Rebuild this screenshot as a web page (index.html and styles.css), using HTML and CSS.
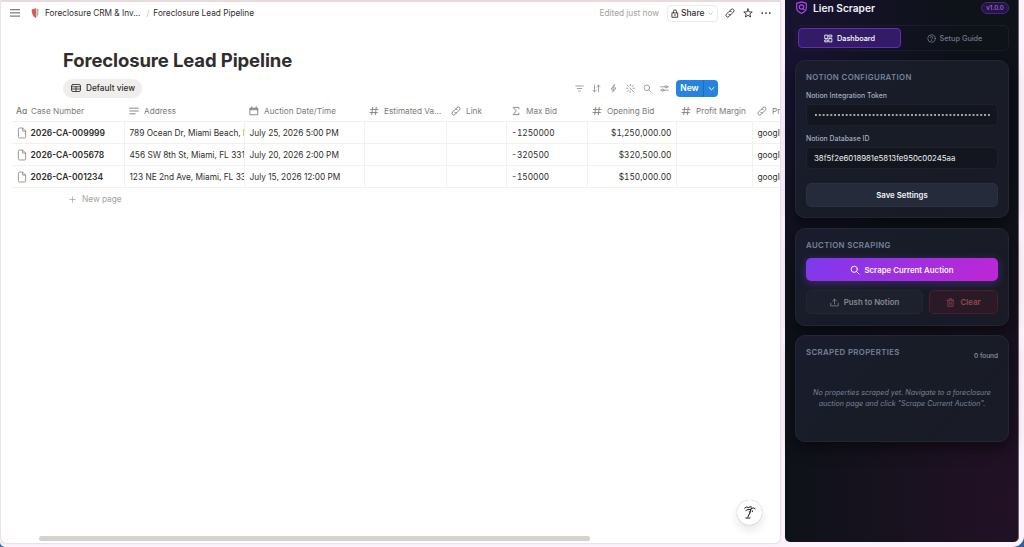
FILE: index.html
```html
<!DOCTYPE html>
<html lang="en">
<head>
  <meta charset="UTF-8">
  <meta name="viewport" content="width=device-width, initial-scale=1.0">
  <title>Foreclosure Lead Pipeline</title>
  <link rel="stylesheet" href="styles.css">
</head>
<body>

  <!-- Shared icons -->
  <svg class="sprite">
    <symbol id="i-hash" viewBox="0 0 16 16"><path d="M6 2 4.400 14M11.600 2 10 14M2.400 5.500h12M1.600 10.500h12"/></symbol>
    <symbol id="i-link" viewBox="0 0 16 16"><path d="M6 10.500a2.800 2.800 0 0 0 3.900-.4l3.700-3.800a2.700 2.700 0 0 0-3.900-3.900L7.500 4.600M10 5.500a2.800 2.800 0 0 0-3.900.4L2.400 9.700a2.700 2.700 0 0 0 3.900 3.900l2.200-2.200"/></symbol>
    <symbol id="i-page" viewBox="0 0 16 20"><path d="M2 3.500A1.800 1.800 0 0 1 3.800 1.700H9l5 5V16.500a1.800 1.800 0 0 1-1.800 1.800H3.800A1.800 1.800 0 0 1 2 16.500zM9 2v4.800h5"/></symbol>
    <symbol id="i-search" viewBox="0 0 16 16"><circle cx="6.800" cy="6.800" r="5"/><path d="m10.500 10.500 4 4"/></symbol>
    <symbol id="i-down" viewBox="0 0 10 10"><path d="m1.500 3.500 3.500 3.300 3.500-3.300"/></symbol>
  </svg>

  <div class="browser">
    <main class="page">
      <header class="topbar">
        <svg class="menu" viewBox="0 0 10 8"><path d="M0 .7h10M0 3.900h10M0 7.100h10"/></svg>
        <svg class="shield" viewBox="0 0 10 12">
          <path d="M5 .8Q7 2 9.200 1.800 9.700 8.500 5 11.500z" fill="#d9dcde"/>
          <path d="M5 .8Q3 2 .8 1.800.3 8.500 5 11.500z" fill="#e0564a"/>
          <path d="M5 1v10" stroke="#7d4b47" stroke-width=".6"/>
          <path d="M7 2v7.500" stroke="#8b8f92" stroke-width=".8"/>
        </svg>
        <span class="crumb">Foreclosure CRM &amp; Inv...</span>
        <span class="slash">/</span>
        <span class="crumb">Foreclosure Lead Pipeline</span>
        <div class="top-actions">
          <span class="edited">Edited just now</span>
          <button class="share">
            <svg class="lock" viewBox="0 0 8 10"><path d="M1 4.300h6v4.900H1zM2.300 4.200V2.700a1.700 1.700 0 0 1 3.400 0v1.500M4 6v1.500"/></svg>
            Share
            <svg class="chev"><use href="#i-down"/></svg>
          </button>
          <svg class="act"><use href="#i-link"/></svg>
          <svg class="act" viewBox="0 0 16 16"><path d="m8 1.500 1.800 4.700 5 .2-3.900 3.100 1.300 4.900L8 11.700l-4.200 2.700 1.300-4.900L1.200 6.400l5-.2z"/></svg>
          <svg class="act dots" viewBox="0 0 16 16"><circle cx="2" cy="8" r="1.400"/><circle cx="8" cy="8" r="1.400"/><circle cx="14" cy="8" r="1.400"/></svg>
        </div>
      </header>

      <h1>Foreclosure Lead Pipeline</h1>

      <div class="viewbar">
        <button class="view">
          <svg viewBox="0 0 20 16"><rect x="1" y="1" width="18" height="14" rx="3"/><path d="M1 5.500h18M1 10h18M10 5.500V15"/></svg>
          Default view
        </button>
        <div class="tools">
          <svg viewBox="0 0 16 16"><path d="M1.500 3.500h13M4 8h8M6.300 12.500h3.400"/></svg>
          <svg viewBox="0 0 16 16"><path d="M4.500 2v12M1.500 11l3 3 3-3M11.500 14V2M8.500 5l3-3 3 3"/></svg>
          <svg viewBox="0 0 16 16"><path d="M9.500 1.500 3.500 9H8l-1.500 5.500L12.500 7H8z"/></svg>
          <svg viewBox="0 0 16 16"><path d="m7 7 7.500 7.500M7.500 1v2.500M1 7.500h2.500M13.500 2l-2.700 2.700M2 13.500l2.700-2.700M12.500 7.500H15M7.500 12.500V15M2 2l2 2"/></svg>
          <svg><use href="#i-search"/></svg>
          <svg viewBox="0 0 16 16"><path d="M1 5h8M13 5h2M1 11h2M7 11h8"/><circle cx="11" cy="5" r="2"/><circle cx="5" cy="11" r="2"/></svg>
        </div>
        <button class="new"><span>New</span><i><svg><use href="#i-down"/></svg></i></button>
      </div>

      <div class="table">
        <div class="row head">
          <div><b class="aa">Aɑ</b>Case Number</div>
          <div><svg viewBox="0 0 16 16"><path d="M1 3.500h14M1 8h14M1 12.500h9"/></svg>Address</div>
          <div><svg viewBox="0 0 16 16"><path d="M2 3.500h12v10.500H2zM2 4.500h12M2 6h12M4.500 1v2M11.500 1v2"/></svg>Auction Date/Time</div>
          <div><svg><use href="#i-hash"/></svg>Estimated Va...</div>
          <div><svg><use href="#i-link"/></svg>Link</div>
          <div><svg viewBox="0 0 16 16"><path d="M12.500 4.500V2.200H3.300L8.500 8l-5.200 5.800h9.200v-2.300"/></svg>Max Bid</div>
          <div><svg><use href="#i-hash"/></svg>Opening Bid</div>
          <div><svg><use href="#i-hash"/></svg>Profit Margin</div>
          <div><svg><use href="#i-link"/></svg>Property</div>
        </div>
        <div class="row">
          <div class="name"><svg><use href="#i-page"/></svg>2026-CA-009999</div>
          <div>789 Ocean Dr, Miami Beach, FL</div>
          <div>July 25, 2026 5:00 PM</div>
          <div></div><div></div>
          <div class="calc">-1250000</div>
          <div class="calc num">$1,250,000.00</div>
          <div></div>
          <div>google.com</div>
        </div>
        <div class="row">
          <div class="name"><svg><use href="#i-page"/></svg>2026-CA-005678</div>
          <div>456 SW 8th St, Miami, FL 33130</div>
          <div>July 20, 2026 2:00 PM</div>
          <div></div><div></div>
          <div class="calc">-320500</div>
          <div class="calc num">$320,500.00</div>
          <div></div>
          <div>google.com</div>
        </div>
        <div class="row">
          <div class="name"><svg><use href="#i-page"/></svg>2026-CA-001234</div>
          <div>123 NE 2nd Ave, Miami, FL 33132</div>
          <div>July 15, 2026 12:00 PM</div>
          <div></div><div></div>
          <div class="calc">-150000</div>
          <div class="calc num">$150,000.00</div>
          <div></div>
          <div>google.com</div>
        </div>
      </div>
      <div class="new-page"><svg viewBox="0 0 10 10"><path d="M5 1v8M1 5h8"/></svg>New page</div>

      <div class="scrollbar"></div>
      <button class="ai">
        <svg viewBox="0 0 16 18"><path d="M2 3.500Q4.500 1 7 3q1-1.600 3.500-.8M10 4q3-1.800 5 .5M3.500 6.500Q6 4 9.500 5.500M9.800 5Q9 9.500 6 14.500M7.500 8l1.200.8M11.500 7v1M3.500 15.800h5"/></svg>
      </button>
    </main>

    <!-- Extension side panel -->
    <aside class="panel">
      <header class="brand">
        <svg class="logo" viewBox="0 0 24 24"><path d="M12 1.500 3 4.500v7.500c0 5.500 4 9 9 10.800 5-1.800 9-5.300 9-10.800V4.500z"/><circle cx="12" cy="11" r="4"/><path d="m14.500 14 2.500 2.500"/></svg>
        <span>Lien Scraper</span>
        <em>v1.0.0</em>
      </header>

      <nav class="tabs">
        <button class="tab active">
          <svg viewBox="0 0 24 24"><path d="M3 3h7v9H3zM14 3h7v5h-7zM14 12h7v9h-7zM3 16h7v5H3z"/></svg>
          Dashboard
        </button>
        <button class="tab">
          <svg viewBox="0 0 24 24"><circle cx="12" cy="12" r="10"/><path d="M9 9a3 3 0 0 1 6 1c0 2-3 2.500-3 4M12 17v.6"/></svg>
          Setup Guide
        </button>
      </nav>

      <section class="card config">
        <h2>NOTION CONFIGURATION</h2>
        <label>Notion Integration Token</label>
        <div class="input token"></div>
        <label>Notion Database ID</label>
        <div class="input">38f5f2e6018981e5813fe950c00245aa</div>
        <button class="btn save">Save Settings</button>
      </section>

      <section class="card scraping">
        <h2>AUCTION SCRAPING</h2>
        <button class="btn scrape"><svg><use href="#i-search"/></svg>Scrape Current Auction</button>
        <div class="pair">
          <button class="btn push"><svg viewBox="0 0 24 24"><path d="M2 14v7h20v-7M12 16V3M7 8l5-5 5 5"/></svg>Push to Notion</button>
          <button class="btn clear"><svg viewBox="0 0 24 24"><path d="M3 6h18M5 6v16h14V6M8.500 6V2h7v4M10 11v6M14 11v6"/></svg>Clear</button>
        </div>
      </section>

      <section class="card results">
        <div class="results-head"><h2>SCRAPED PROPERTIES</h2><span>0 found</span></div>
        <p>No properties scraped yet. Navigate to a foreclosure auction page and click "Scrape Current Auction".</p>
      </section>
    </aside>
  </div>

</body>
</html>
```
FILE: styles.css
```css
* {
  box-sizing: border-box;
}

body {
  margin: 0;
  height: 547px;
  overflow: hidden;
  background: #3b5f96;
  font-family: Inter, "Liberation Sans", sans-serif;
}

svg {
  fill: none;
  stroke: currentColor;
  stroke-width: 1.4;
  stroke-linecap: round;
  stroke-linejoin: round;
  flex: none;
}

button {
  font-family: inherit;
  border: 0;
  padding: 0;
  margin: 0;
  display: flex;
  align-items: center;
}

.sprite {
  display: none;
}

.browser {
  height: 547px;
  display: flex;
  gap: 5px;
  padding-left: 1px;
  background: #fbf2fb;
  border-radius: 0 0 11px 5px;
}

/* Notion page */
.page {
  position: relative;
  width: 779px;
  height: 543px;
  background: #fff;
  border-top: 2px solid #e6dcdc;
  border-radius: 0 0 5px 5px;
  box-shadow: 0 0 2px rgba(0, 0, 0, 0.25);
  overflow: hidden;
  color: #2f2e2c;
  font-size: 8.25px;
}

.topbar {
  display: flex;
  align-items: center;
  height: 22px;
  padding-left: 9px;
}

.menu {
  width: 10px;
  height: 8px;
  stroke: #5f5e5b;
  stroke-width: 1;
  margin-right: 11px;
}

.shield {
  width: 9px;
  height: 12px;
  stroke: none;
  margin-right: 5px;
}

.slash {
  color: #c4c3c0;
  margin: 0 4px 0 6px;
}

.top-actions {
  display: flex;
  align-items: center;
  margin-left: auto;
  padding-right: 9px;
}

.edited {
  color: #a3a19d;
  margin-right: 8px;
}

.share {
  height: 17px;
  width: 51px;
  padding-left: 3px;
  border: 1px solid #eae9e8;
  border-radius: 4px;
  background: #fff;
  font-size: 8.5px;
  font-weight: 500;
  color: #2f2e2c;
  margin-right: 7px;
}

.lock {
  width: 8px;
  height: 9px;
  stroke-width: 1;
  margin-right: 2px;
}

.chev {
  width: 5px;
  height: 5px;
  color: #a3a19d;
  margin-left: 3px;
}

.act {
  width: 10px;
  height: 10px;
  margin-right: 8px;
}

.act.dots {
  fill: #2f2e2c;
  stroke: none;
  margin-right: 0;
}

h1 {
  margin: 23px 0 0 62px;
  font-size: 18.5px;
  line-height: 26px;
  font-weight: 700;
  letter-spacing: -0.12px;
}

.viewbar {
  display: flex;
  align-items: center;
  height: 20px;
  margin-top: 5px;
  padding: 0 62px;
}

.view {
  width: 79px;
  height: 19px;
  padding-left: 8px;
  border-radius: 10px;
  background: #efeeec;
  font-size: 8.25px;
  font-weight: 500;
  color: #2f2e2c;
  white-space: nowrap;
}

.view svg {
  width: 10px;
  height: 8px;
  stroke-width: 1.7;
  margin-right: 5px;
}

.tools {
  display: flex;
  gap: 8px;
  margin-left: auto;
  margin-right: 7px;
  color: #8a8884;
}

.tools svg {
  width: 9px;
  height: 9px;
}

.new {
  width: 42px;
  height: 17px;
  border-radius: 4px;
  background: #2783de;
  color: #fff;
  font-size: 8.5px;
  font-weight: 600;
}

.new span {
  width: 27px;
  text-align: center;
}

.new i {
  flex: 1;
  height: 17px;
  display: flex;
  align-items: center;
  justify-content: center;
  border-left: 1px solid #1f6ebd;
}

.new i svg {
  width: 7px;
  height: 7px;
}

.table {
  margin: 2px 0 0 11px;
}

.row {
  display: grid;
  grid-template-columns: 113px 120px 120px 82px 60px 81px 89px 76px 80px;
  height: 22px;
  font-size: 8.3px;
}

.row > div {
  height: 22px;
  line-height: 22px;
  padding-left: 4.5px;
  border-right: 1px solid #f1f1f0;
  border-bottom: 1px solid #f1f1f0;
  white-space: nowrap;
  overflow: hidden;
}

.row.head > div {
  display: flex;
  align-items: center;
  padding-left: 4px;
  border-right-color: transparent;
  font-size: 8.2px;
  color: #7d7a75;
}

.head svg {
  width: 10px;
  height: 10px;
  margin-right: 5px;
}

.head .aa {
  width: 11px;
  font-weight: 500;
  font-size: 8.5px;
  margin-right: 4px;
}

.row .name {
  display: flex;
  align-items: center;
  font-size: 8.5px;
  font-weight: 600;
}

.name svg {
  width: 10px;
  height: 12px;
  margin-right: 4px;
  color: #8a8884;
}

/* formula and currency cells */
.row .calc {
  font-variant-numeric: tabular-nums;
}

.row .num {
  text-align: right;
  padding-right: 4.5px;
}

.new-page {
  display: flex;
  align-items: center;
  height: 22px;
  margin-left: 68px;
  color: #a3a19d;
}

.new-page svg {
  width: 7px;
  height: 7px;
  margin-right: 6px;
  stroke-width: 1;
}

.scrollbar {
  position: absolute;
  left: 38px;
  bottom: 2px;
  width: 551px;
  height: 5px;
  border-radius: 3px;
  background: #d3d2cc;
}

.ai {
  position: absolute;
  left: 736px;
  bottom: 18px;
  width: 25px;
  height: 25px;
  border-radius: 50%;
  background: #fff;
  box-shadow: 0 0 1px rgba(0, 0, 0, 0.4), 0 5px 10px rgba(0, 0, 0, 0.1);
  justify-content: center;
  color: #111;
}

.ai svg {
  width: 13px;
  height: 15px;
  stroke-width: 1.2;
}

/* Side panel */
.panel {
  width: 234px;
  height: 542px;
  padding: 0 9px 0 10px;
  border-right: 1px solid #6b6773;
  border-radius: 0 0 5px 5px;
  background:
    radial-gradient(ellipse 230px 330px at 100% 93%, rgba(62, 16, 54, 0.45), transparent),
    radial-gradient(ellipse 170px 260px at 0% 10%, rgba(46, 20, 100, 0.35), transparent),
    #0e1219;
  color: #fff;
}

.brand {
  display: flex;
  align-items: center;
  height: 15px;
  font-size: 10.2px;
  font-weight: 600;
  color: #f1f1f7;
}

.logo {
  width: 13px;
  height: 13px;
  stroke: #a944ea;
  stroke-width: 2.2;
  margin-right: 5px;
}

.brand em {
  margin-left: auto;
  width: 28px;
  height: 12px;
  border: 1px solid #4a2682;
  border-radius: 7px;
  background: #23163f;
  color: #a66bf0;
  font-size: 6.2px;
  font-style: normal;
  font-weight: 500;
  line-height: 10px;
  text-align: center;
}

.tabs {
  display: flex;
  gap: 2px;
  height: 26px;
  margin-top: 10px;
  padding: 2px;
  border: 1px solid #1d1d29;
  border-radius: 6px;
}

.tab {
  flex: 1;
  justify-content: center;
  gap: 4px;
  height: 20px;
  border: 1px solid transparent;
  border-radius: 4px;
  background: none;
  color: #6f7a8d;
  font-size: 7.3px;
  font-weight: 500;
}

.tab svg {
  width: 9px;
  height: 9px;
  stroke-width: 2.2;
}

.tab.active {
  background: #341b68;
  border-color: #5e30b4;
  color: #fff;
}

.card {
  padding: 10px 10px 0;
  border: 1px solid #222735;
  border-radius: 10px;
  background: linear-gradient(135deg, #1a1c2e, #181c26 50%, #191b27);
  box-shadow: 0 6px 16px rgba(0, 0, 0, 0.5);
}

.card h2 {
  margin: 0;
  font-size: 7.8px;
  line-height: 12px;
  font-weight: 600;
  letter-spacing: 0.38px;
  color: #76839a;
}

.config {
  height: 158px;
  margin-top: 9px;
}

.card label {
  display: block;
  margin-top: 6.5px;
  font-size: 6.9px;
  line-height: 11px;
  font-weight: 500;
  color: #a3aec0;
}

.token + label {
  margin-top: 7px;
}

.input {
  display: flex;
  align-items: center;
  height: 21.5px;
  margin-top: 3.5px;
  padding: 0 7px;
  border: 1px solid #1d222d;
  border-radius: 5px;
  background: #13161e;
  font-size: 7.8px;
  color: #eef1f6;
}

.token::before {
  content: "";
  width: 100%;
  height: 2px;
  background: radial-gradient(circle, #e9ecf2 0.5px, transparent 1.1px) 0 0 / 3.85px 2px;
}

.btn {
  justify-content: center;
  height: 24px;
  border-radius: 5px;
  font-size: 7.85px;
  font-weight: 600;
  color: #f1f4f8;
}

.btn svg {
  width: 9px;
  height: 9px;
  margin-right: 5px;
  stroke-width: 2;
}

.save {
  width: 100%;
  margin-top: 14.5px;
  background: #252b3a;
  border: 1px solid #2a3141;
}

.scraping {
  height: 98px;
  margin-top: 10px;
}

.scrape {
  width: 100%;
  height: 23px;
  margin-top: 7px;
  background: linear-gradient(135deg, #7c3aed, #c026d3);
  box-shadow: 0 2px 8px rgba(124, 58, 237, 0.4);
}

.btn.scrape svg {
  width: 10px;
  height: 10px;
  margin-right: 4px;
  stroke-width: 1.6;
}

.pair {
  display: flex;
  gap: 6px;
  margin-top: 9px;
}

.push {
  width: 117px;
  background: #1d212d;
  border: 1px solid #222736;
  color: #858993;
}

.clear {
  flex: 1;
  background: #2a1a25;
  border: 1px solid #4a1e2c;
  color: #964852;
}

.results {
  height: 107px;
  margin-top: 9px;
}

.results-head {
  display: flex;
  justify-content: space-between;
}

.results-head span {
  margin-top: 4px;
  font-size: 6.5px;
  line-height: 12px;
  font-weight: 500;
  color: #8b97aa;
}

.results p {
  margin: 25px 0 0;
  font-size: 7.15px;
  line-height: 11px;
  font-style: italic;
  text-align: center;
  color: #78849a;
}
```
